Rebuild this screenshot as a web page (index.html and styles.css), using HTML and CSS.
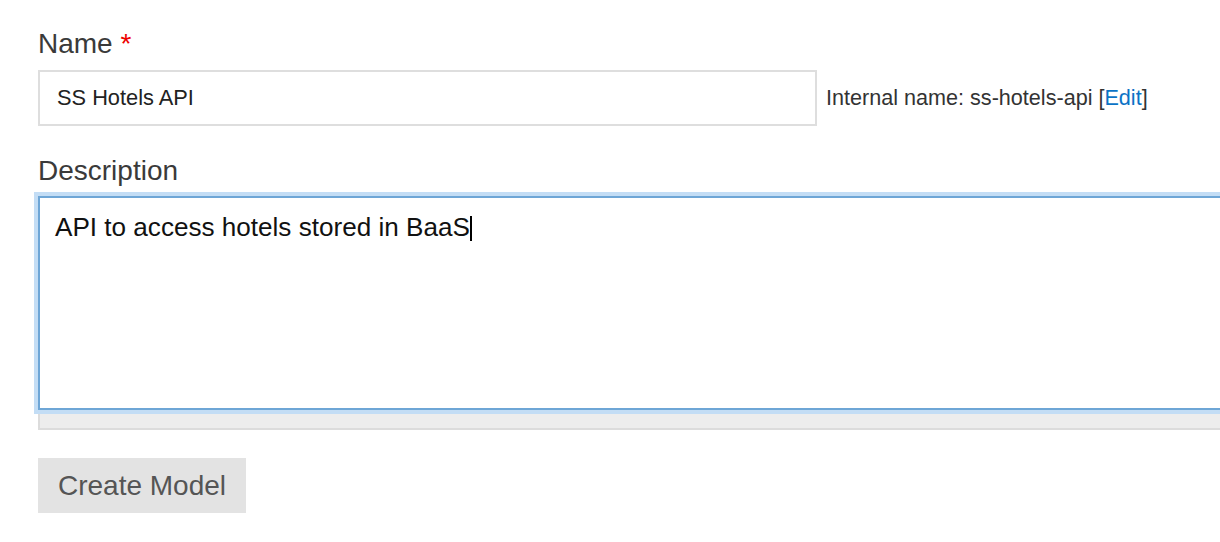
FILE: index.html
```html
<!DOCTYPE html>
<html>
<head>
<meta charset="utf-8">
<title>Create Model</title>
<link rel="stylesheet" href="styles.css">
</head>
<body>
<form class="form">
  <div class="field-label">Name <span class="req">*</span></div>
  <div class="name-row">
    <div class="text-input">SS Hotels API</div>
    <div class="internal">Internal name: ss-hotels-api [<a class="edit" href="#">Edit</a>]</div>
  </div>
  <div class="field-label desc-label">Description</div>
  <div class="area-wrap">
    <div class="text-area">API to access hotels stored in BaaS<span class="caret"></span></div>
  </div>
  <div class="btn">Create Model</div>
</form>
</body>
</html>
```

FILE: styles.css
```css
html, body {
  margin: 0;
  padding: 0;
  background: #fff;
  overflow: hidden;
}

body {
  font-family: "Liberation Sans", Arial, Helvetica, sans-serif;
  color: #333;
}

.form {
  padding: 28px 0 0 38px;
}

.field-label {
  font-size: 28px;
  line-height: 32px;
  color: #3a3a3a;
}

.req {
  color: #e00;
}

.name-row {
  display: flex;
  align-items: center;
  margin-top: 10px;
}

.text-input {
  box-sizing: border-box;
  width: 779px;
  height: 56px;
  border: 2px solid #dedede;
  padding: 0 16px 0 17px;
  display: flex;
  align-items: center;
  font-size: 21.8px;
  color: #222;
}

.internal {
  margin-left: 9px;
  font-size: 21.6px;
  color: #333;
}

.edit {
  color: #0b73c6;
  text-decoration: none;
}

.desc-label {
  margin-top: 29px;
}

.area-wrap {
  margin-top: 9px;
  width: 1240px;
  border: 2px solid #dcdcdc;
  border-top: none;
  background: #ededed;
  padding-bottom: 18px;
}

.text-area {
  box-sizing: border-box;
  margin: 0 -2px;
  height: 214px;
  border: 2px solid #6ea6d6;
  box-shadow: 0 0 0 4px #c3ddf5;
  background: #fff;
  padding: 14px 15px;
  font-size: 26.1px;
  line-height: 30px;
  color: #111;
}

.caret {
  display: inline-block;
  width: 2px;
  height: 25px;
  background: #000;
  vertical-align: -5px;
  margin-left: 0;
}

.btn {
  margin-top: 28px;
  box-sizing: border-box;
  width: 208px;
  height: 55px;
  background: #e3e3e3;
  color: #555;
  font-size: 28px;
  display: flex;
  align-items: center;
  justify-content: center;
}
```
